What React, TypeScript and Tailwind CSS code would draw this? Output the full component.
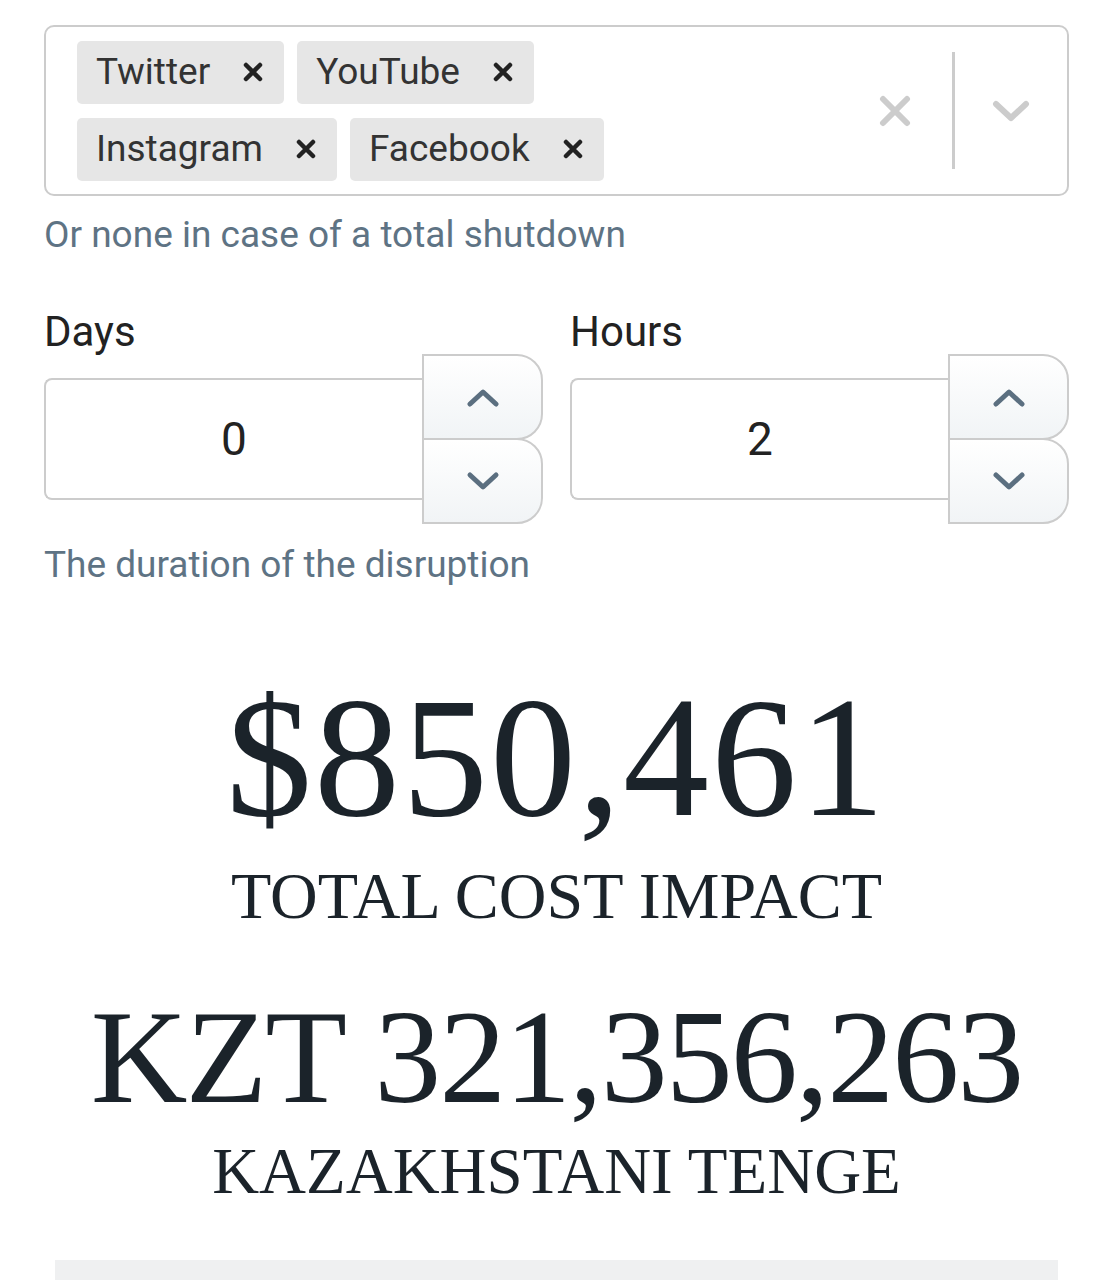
import { useState } from "react";

const tags = [
  ["Twitter", "YouTube"],
  ["Instagram", "Facebook"],
];

function RemoveIcon() {
  return (
    <svg width="20" height="20" viewBox="0 0 20 20" className="text-[#222]">
      <path d="M3 3 L17 17 M17 3 L3 17" stroke="currentColor" strokeWidth="4.5" strokeLinecap="round" />
    </svg>
  );
}

function Chevron({ up, className }: { up?: boolean; className?: string }) {
  return (
    <svg width="34" height="20" viewBox="0 0 34 20" className={className}>
      <path
        d={up ? "M4 17 L17 5 L30 17" : "M4 4 L17 16 L30 4"}
        fill="none"
        stroke="currentColor"
        strokeWidth="5"
        strokeLinecap="round"
        strokeLinejoin="round"
      />
    </svg>
  );
}

function NumberField({ label, value }: { label: string; value: number }) {
  return (
    <div>
      <div className="text-[42px] leading-[44px] text-[#222] h-[44px]">{label}</div>
      <div className="flex items-center">
        <div className="flex-1 h-[122px] border-2 border-r-0 border-[#ccc] rounded-l-[8px] flex items-center justify-center text-[46px] text-[#222]">
          {value}
        </div>
        <div className="w-[121px] flex flex-col">
          <button className="h-[86px] border-2 border-[#ccc] rounded-tr-[26px] rounded-br-[26px] bg-gradient-to-b from-white to-[#f1f4f6] flex items-center justify-center">
            <Chevron up className="text-[#5b6f80]" />
          </button>
          <button className="h-[86px] -mt-[2px] border-2 border-[#ccc] rounded-tr-[26px] rounded-br-[26px] bg-gradient-to-b from-white to-[#f1f4f6] flex items-center justify-center">
            <Chevron className="text-[#5b6f80]" />
          </button>
        </div>
      </div>
    </div>
  );
}

export default function App() {
  const [days] = useState(0);
  const [hours] = useState(2);

  return (
    <div className="w-[1113px] min-h-[1280px] bg-white font-['Roboto',sans-serif] overflow-hidden">
      <div className="px-[44px] pt-[25px]">
        {/* Platform multi-select */}
        <div className="border-2 border-[#ccc] rounded-[10px] flex items-center min-h-[171px]">
          <div className="flex-1 flex flex-col gap-[14px] pl-[31px] py-[13px]">
            {tags.map((row, i) => (
              <div key={i} className="flex gap-[13px]">
                {row.map((t) => (
                  <span key={t} className="h-[63px] bg-[#e6e6e6] rounded-[5px] flex items-center pl-[19px] pr-[21px] text-[37px] text-[#333]">
                    {t}
                    <span className="ml-[33px] flex items-center">
                      <RemoveIcon />
                    </span>
                  </span>
                ))}
              </div>
            ))}
          </div>
          <div className="flex items-center self-stretch py-[25px]">
            <svg width="32" height="32" viewBox="0 0 32 32" className="text-[#ccc] mr-[41px]">
              <path d="M4 4 L28 28 M28 4 L4 28" stroke="currentColor" strokeWidth="6" strokeLinecap="round" />
            </svg>
            <div className="w-[3px] self-stretch bg-[#ccc]" />
            <div className="w-[112px] flex justify-center">
              <svg width="38" height="24" viewBox="0 0 38 24" className="text-[#ccc]">
                <path d="M4 5 L19 19 L34 5" fill="none" stroke="currentColor" strokeWidth="6" strokeLinecap="round" strokeLinejoin="round" />
              </svg>
            </div>
          </div>
        </div>
        <p className="mt-[19px] text-[37px] leading-[40px] text-[#5e7384]">Or none in case of a total shutdown</p>

        {/* Duration */}
        <div className="mt-[55px] grid grid-cols-2 gap-[27px]">
          <NumberField label="Days" value={days} />
          <NumberField label="Hours" value={hours} />
        </div>
        <p className="mt-[21px] text-[37px] leading-[40px] text-[#5e7384]">The duration of the disruption</p>
      </div>

      {/* Totals */}
      <div className="mt-[97px] flex flex-col items-center text-[#1b232a] font-['Liberation_Serif',serif]">
        <div className="text-[172px] leading-[150px] tracking-[2px]">$850,461</div>
        <div className="mt-[24px] text-[66px] leading-[80px]">TOTAL COST IMPACT</div>
        <div className="mt-[61px] text-[134px] leading-[120px] tracking-[-2px]">KZT 321,356,263</div>
        <div className="mt-[14px] text-[65px] leading-[80px]">KAZAKHSTANI TENGE</div>
      </div>

      <div className="mx-[55px] mt-[49px] h-[40px] bg-[#eff0f1]" />
    </div>
  );
}
